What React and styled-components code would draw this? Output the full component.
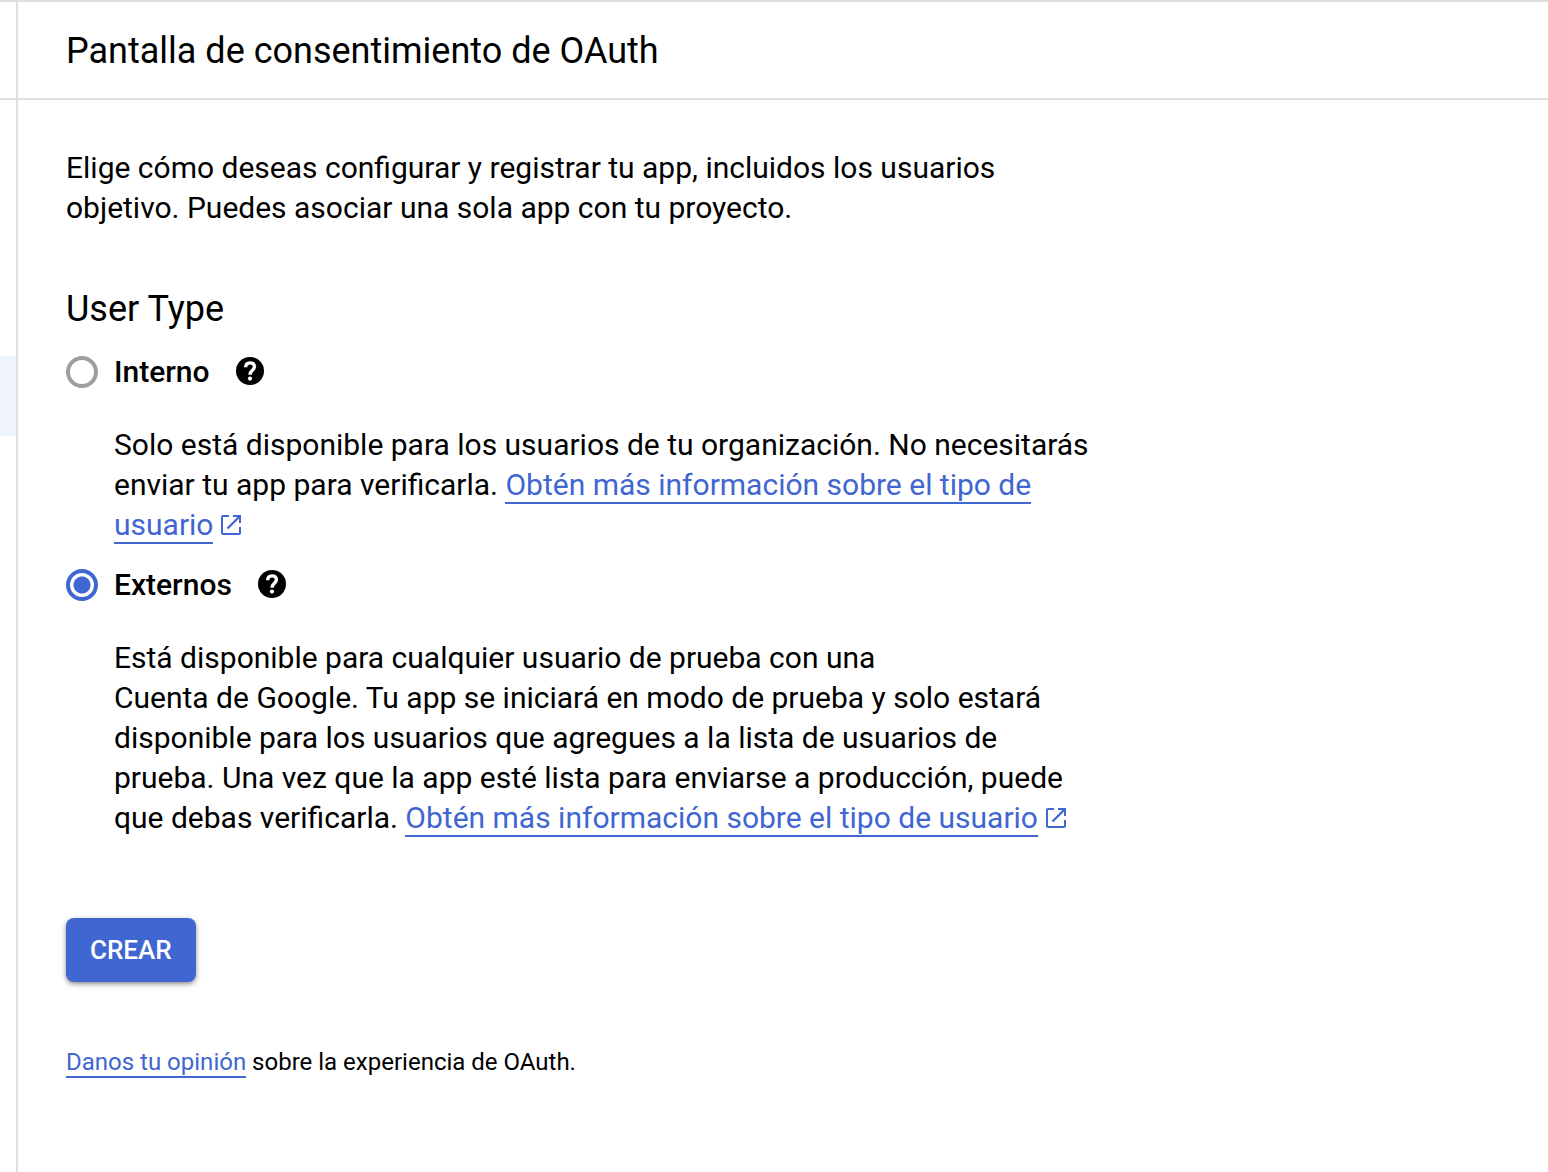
import React, { useState } from "react";
import styled, { createGlobalStyle } from "styled-components";

const blue = "#3f66d1";

const GlobalStyle = createGlobalStyle`
  * { box-sizing: border-box; }
  body {
    margin: 0;
    background: #fff;
    color: #000;
    font-family: Roboto, "Noto Sans", sans-serif;
  }
`;

const Page = styled.div`
  display: grid;
  grid-template-columns: 18px minmax(0, 1fr);
  min-height: 100vh;
  border-top: 2px solid #e0e0e0;
`;

const Sidebar = styled.aside`
  border-right: 2px solid #e0e0e0;
`;

const SidebarHeader = styled.div`
  height: 98px;
  border-bottom: 2px solid #e0e0e0;
`;

const SelectedItem = styled.div`
  height: 80px;
  margin-top: 256px;
  background: #f0f5ff;
`;

const Header = styled.header`
  display: flex;
  align-items: center;
  height: 98px;
  padding: 2px 48px 0;
  border-bottom: 2px solid #e0e0e0;
`;

const Title = styled.h1`
  margin: 0;
  font-size: 36px;
  font-weight: 400;
  line-height: 48px;
`;

const Content = styled.div`
  max-width: 1120px;
  padding: 48px;
`;

const Intro = styled.p`
  max-width: 960px;
  margin: 0 0 56px;
  font-size: 30px;
  line-height: 40px;
`;

const Options = styled.fieldset`
  margin: 0;
  padding: 0;
  border: 0;
`;

const Legend = styled.legend`
  margin-bottom: 18px;
  padding: 0;
  font-size: 36px;
  line-height: 50px;
`;

const OptionRow = styled.div`
  display: flex;
  align-items: center;
  height: 40px;
`;

const Radio = styled.input`
  appearance: none;
  width: 32px;
  height: 32px;
  margin: 0 16px 0 0;
  border: 4px solid #9e9e9e;
  border-radius: 50%;

  &:checked {
    border-color: ${blue};
    background: radial-gradient(circle, ${blue} 8px, transparent 9px);
  }
`;

const OptionLabel = styled.label`
  margin-right: 24px;
  font-size: 30px;
  font-weight: 500;
  line-height: 40px;
`;

const HelpButton = styled.button`
  display: flex;
  padding: 0;
  border: 0;
  background: none;
  color: #000;
`;

const Description = styled.p`
  max-width: 980px;
  margin: 33px 0 20px 48px;
  font-size: 30px;
  line-height: 40px;
`;

const Link = styled.a`
  border-bottom: 2px solid ${blue};
  color: ${blue};
  text-decoration: none;
`;

const LinkIcon = styled.svg`
  width: 24px;
  height: 24px;
  margin-left: 6px;
  color: ${blue};
  vertical-align: -2px;
`;

const CreateButton = styled.button`
  display: block;
  height: 64px;
  margin: 60px 0;
  padding: 0 24px;
  border: 0;
  border-radius: 8px;
  background: ${blue};
  box-shadow: 0 2px 4px rgba(0, 0, 0, 0.4), 0 2px 12px rgba(0, 0, 0, 0.08);
  color: #fff;
  font: 500 26px/40px Roboto, sans-serif;
`;

const Feedback = styled.p`
  margin: 0;
  font-size: 24px;
  line-height: 40px;
`;

const HelpIcon = () => (
  <svg width="32" height="32" viewBox="0 0 32 32" aria-hidden="true">
    <circle cx="16" cy="15" r="14" fill="currentColor" />
    <path
      d="M11.7 11.2C11.7 8.5 13.4 6.9 16 6.9s4.4 1.5 4.4 3.9c0 3.5-4.4 3.6-4.4 8"
      fill="none"
      stroke="#fff"
      strokeWidth="3.4"
    />
    <circle cx="16" cy="22.6" r="2.1" fill="#fff" />
  </svg>
);

const ExternalIcon = () => (
  <LinkIcon viewBox="0 0 24 24" fill="none" stroke="currentColor" strokeWidth="2" aria-hidden="true">
    <path d="M10 3H4a1 1 0 0 0-1 1v16a1 1 0 0 0 1 1h16a1 1 0 0 0 1-1v-6" />
    <path d="M14 3h7v7" />
    <path d="M20.5 3.5 8.5 15.5" strokeWidth="2.3" />
  </LinkIcon>
);

const MoreLink = () => (
  <>
    <Link href="#user-type">Obtén más información sobre el tipo de usuario</Link>
    <ExternalIcon />
  </>
);

const Option = ({ id, label, selected, onSelect, children }) => (
  <>
    <OptionRow>
      <Radio type="radio" name="user-type" id={id} checked={selected} onChange={() => onSelect(id)} />
      <OptionLabel htmlFor={id}>{label}</OptionLabel>
      <HelpButton type="button" aria-label="Ayuda">
        <HelpIcon />
      </HelpButton>
    </OptionRow>
    <Description>{children}</Description>
  </>
);

export default function App() {
  const [type, setType] = useState("externos");
  return (
    <>
      <GlobalStyle />
      <Page>
        <Sidebar>
          <SidebarHeader />
          <SelectedItem />
        </Sidebar>
        <main>
          <Header>
            <Title>Pantalla de consentimiento de OAuth</Title>
          </Header>
          <Content>
            <Intro>
              Elige cómo deseas configurar y registrar tu app, incluidos los usuarios objetivo. Puedes asociar una
              sola app con tu proyecto.
            </Intro>
            <Options>
              <Legend>User Type</Legend>
              <Option id="interno" label="Interno" selected={type === "interno"} onSelect={setType}>
                Solo está disponible para los usuarios de tu organización. No necesitarás enviar tu app para
                verificarla. <MoreLink />
              </Option>
              <Option id="externos" label="Externos" selected={type === "externos"} onSelect={setType}>
                Está disponible para cualquier usuario de prueba con una Cuenta&nbsp;de&nbsp;Google. Tu app
                se iniciará en modo de prueba y solo estará disponible para los usuarios que agregues a la lista de
                usuarios de prueba. Una vez que la app esté lista para enviarse a producción, puede que debas
                verificarla. <MoreLink />
              </Option>
            </Options>
            <CreateButton type="button">CREAR</CreateButton>
            <Feedback>
              <Link href="#opinion">Danos tu opinión</Link> sobre la experiencia de OAuth.
            </Feedback>
          </Content>
        </main>
      </Page>
    </>
  );
}
